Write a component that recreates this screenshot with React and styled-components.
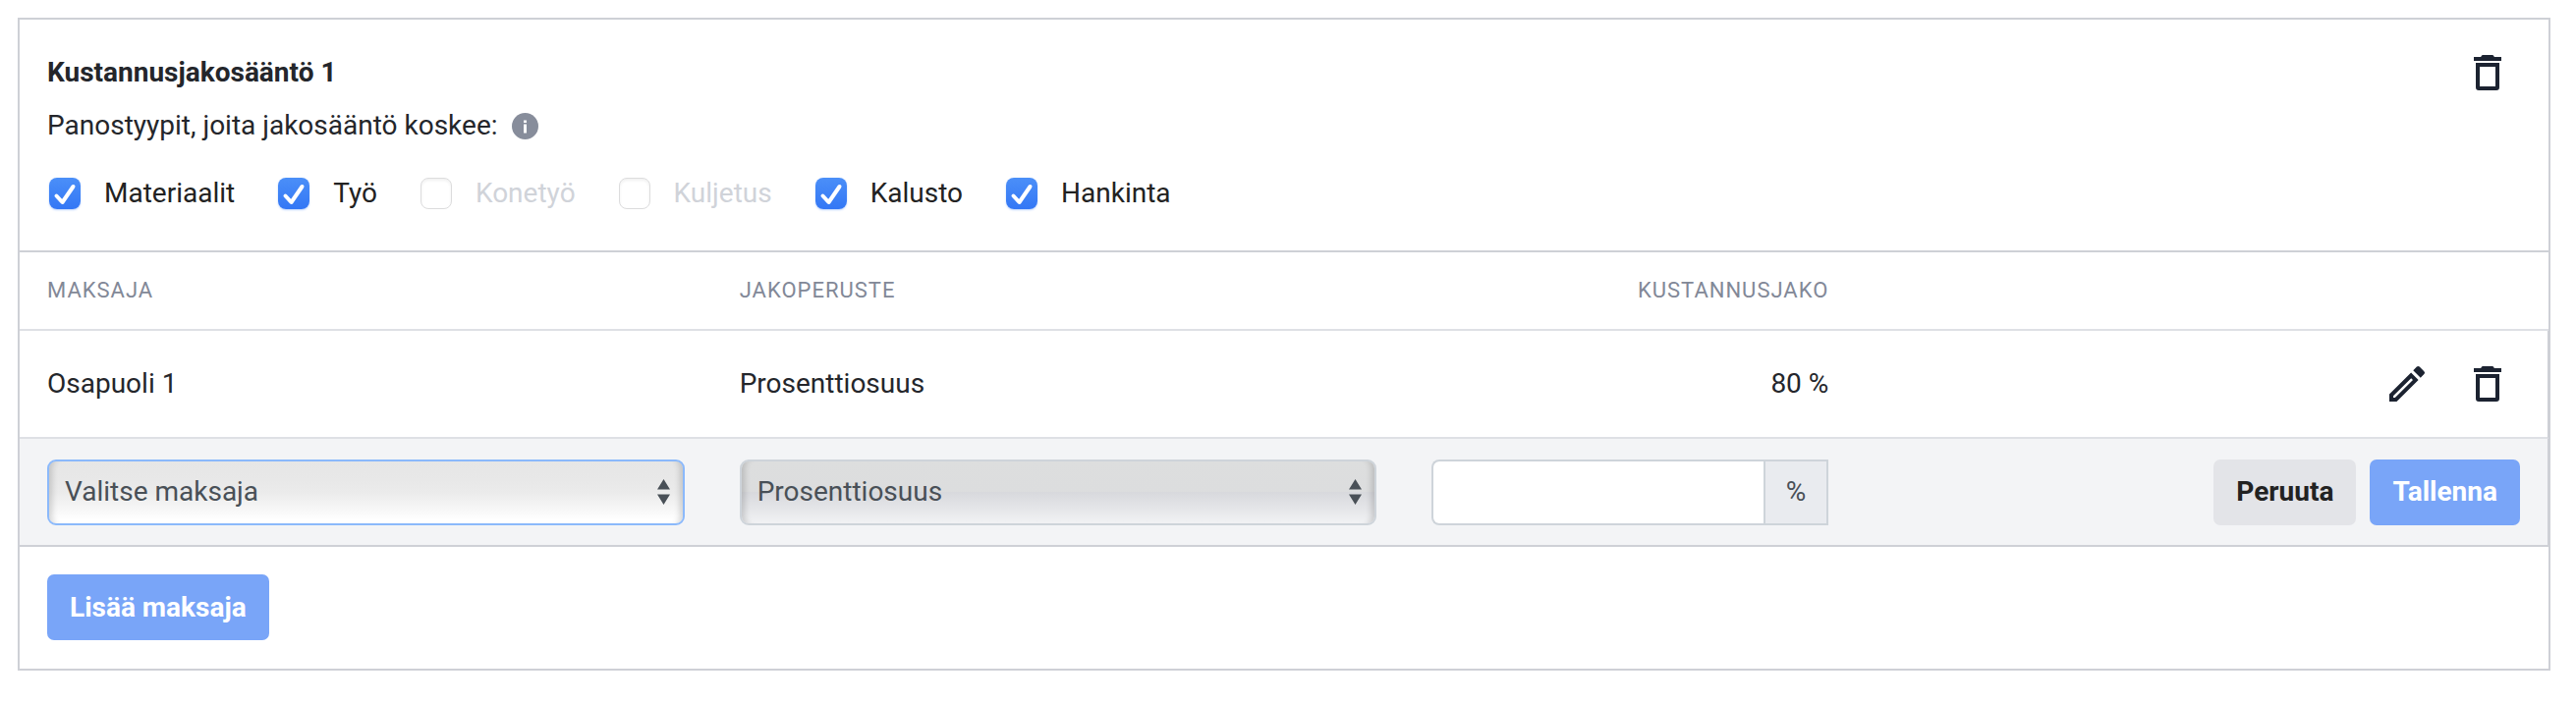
import React from "react";
import styled, { createGlobalStyle, css } from "styled-components";

const GlobalStyle = createGlobalStyle`
  *, *::before, *::after { box-sizing: border-box; }
  body {
    margin: 0;
    background: #fff;
    color: #24262b;
    font-family: Roboto, "Liberation Sans", sans-serif;
    font-size: 28px;
    line-height: 34px;
  }
  button, input, select { font: inherit; color: inherit; margin: 0; }
`;

const Page = styled.main`
  padding: 18px 26px 33px 18px;
`;

const Card = styled.section`
  border: 2px solid #ced0d6;
`;

const CardHeader = styled.header`
  display: flex;
  justify-content: space-between;
  align-items: flex-start;
  padding: 30px 38px 41px 28px;
  border-bottom: 2px solid #ced0d6;
`;

const Title = styled.h2`
  margin: 7px 0 0;
  font-size: 28px;
  line-height: 34px;
  font-weight: 700;
`;

const Rule = styled.fieldset`
  margin: 20px 0 0;
  padding: 0;
  border: 0;
`;

const Legend = styled.legend`
  display: flex;
  align-items: center;
  gap: 14px;
  padding: 0;
`;

const InfoIcon = styled.svg`
  width: 27px;
  height: 27px;
  flex: none;
`;

const Choices = styled.div`
  display: flex;
  gap: 44px;
  margin-top: 35px;
  padding-left: 2px;
`;

const Choice = styled.label`
  display: flex;
  align-items: center;
  gap: 24px;
  color: ${(p) => (p.$muted ? "#d0d3d9" : "#222")};
`;

const BoxWrap = styled.span`
  position: relative;
  display: flex;
  width: 32px;
  height: 32px;
`;

const Box = styled.input`
  appearance: none;
  width: 32px;
  height: 32px;
  margin: 0;
  border: 1px solid #dcdcdd;
  border-radius: 8px;
  background: #fff;
  box-shadow: inset 0 2px 3px rgba(0, 0, 0, 0.06);
  &:checked {
    border: 0;
    background: linear-gradient(#4b8ff8, #3377f5);
    box-shadow: 0 1px 2px rgba(51, 119, 245, 0.35);
  }
`;

const Tick = styled.svg`
  position: absolute;
  inset: 0;
  pointer-events: none;
`;

const IconButton = styled.button`
  display: flex;
  width: 48px;
  height: 48px;
  padding: 0;
  border: 0;
  background: none;
  color: #1c2331;
`;

const Table = styled.table`
  width: 100%;
  table-layout: fixed;
  border-collapse: separate;
  border-spacing: 0;
`;

const ShareCol = styled.col`
  width: 460px;
`;

const Head = styled.th`
  height: 80px;
  padding: 0 28px;
  border-bottom: 2px solid #dee0e5;
  color: #828897;
  font-size: 22px;
  font-weight: 400;
  letter-spacing: 1px;
  text-align: ${(p) => (p.$end ? "right" : "left")};
`;

const Cell = styled.td`
  height: 110px;
  padding: 0 28px;
  text-align: ${(p) => (p.$end ? "right" : "left")};
  border-bottom: 2px solid ${(p) => (p.$edit ? "#ced0d6" : "#dee0e5")};
  background: ${(p) => (p.$edit ? "#f3f4f6" : "#fff")};
  &:last-child { border-right: 1px solid #ced0d6; }
`;

const Actions = styled.div`
  display: flex;
  justify-content: flex-end;
  align-items: center;
  gap: ${(p) => (p.$icons ? "34px" : "14px")};
  padding-right: ${(p) => (p.$icons ? "9px" : "0")};
`;

const SelectWrap = styled.div`
  position: relative;
  display: flex;
`;

const fieldBorder = css`
  border: 2px solid #ced4da;
  height: 67px;
`;

const Select = styled.select`
  ${fieldBorder}
  appearance: none;
  width: 100%;
  padding: 0 48px 0 16px;
  border-radius: 9px;
  color: #495057;
  outline: none;
  background: linear-gradient(#e6e6e6 0%, #e8e8e8 30%, #ebebeb 50%, #f8f8f8 80%, #fff 95%);
  box-shadow: inset 9px 0 6px -6px rgba(0, 0, 0, 0.16), inset -9px 0 6px -6px rgba(0, 0, 0, 0.16);
  ${(p) => p.$focused && css`border-color: #8bb9fb;`}
  &:disabled {
    opacity: 1;
    background: linear-gradient(#dddede 0%, #dcddde 48%, #d8d9dd 50%, #e4e5e8 75%, #f0f1f3 98%);
  }
`;

const Arrows = styled.svg`
  position: absolute;
  right: 15px;
  top: 20px;
  pointer-events: none;
`;

const InputGroup = styled.div`
  display: flex;
`;

const AmountInput = styled.input`
  ${fieldBorder}
  flex: 1;
  min-width: 0;
  padding: 0 16px;
  border-radius: 8px 0 0 8px;
  border-right: 0;
  background: #fff;
`;

const Unit = styled.span`
  ${fieldBorder}
  display: flex;
  align-items: center;
  padding: 0 21px;
  background: #e9ebef;
  color: #495057;
`;

const Button = styled.button`
  height: 67px;
  padding: 0 23px;
  border: 0;
  border-radius: 7px;
  font-weight: 700;
  white-space: nowrap;
  background: ${(p) => (p.$primary ? "#79a5f8" : "#e3e4e8")};
  color: ${(p) => (p.$primary ? "#fff" : "#222")};
`;

const CardFooter = styled.footer`
  display: flex;
  padding: 28px 28px 29px;
`;

function TrashIcon() {
  return (
    <svg width="48" height="48" viewBox="0 0 24 24" fill="currentColor" aria-hidden="true">
      <path d="M5 4h3.600c.3-.7.6-1 1.200-1h4.400c.6 0 .9.3 1.200 1H19v2H5zM6 7h12v12.500a1.500 1.500 0 0 1-1.500 1.500h-9A1.500 1.500 0 0 1 6 19.500zM8 9v10h8V9z" fillRule="evenodd" />
    </svg>
  );
}

function PencilIcon() {
  return (
    <svg width="48" height="48" viewBox="0 0 24 24" fill="currentColor" aria-hidden="true">
      <path fillRule="evenodd" d="M3 17.250 14.060 6.190l3.750 3.750L6.750 21H3zM5 18.080V19h.920L15 10l-.9-.9z" />
      <path d="M15.130 5.120 16.950 3.300a1 1 0 0 1 1.420 0l2.330 2.330a1 1 0 0 1 0 1.420l-1.820 1.820z" />
    </svg>
  );
}

function SelectField({ label, value, ...rest }) {
  return (
    <SelectWrap>
      <Select aria-label={label} defaultValue={value} {...rest}>
        <option>{value}</option>
      </Select>
      <Arrows width="13" height="26" viewBox="0 0 13 26" fill="#495057" aria-hidden="true">
        <path d="M6.500 0 13 10.500H0zM0 15.500h13L6.500 26z" />
      </Arrows>
    </SelectWrap>
  );
}

const choices = [
  { name: "Materiaalit", on: true },
  { name: "Työ", on: true },
  { name: "Konetyö", disabled: true },
  { name: "Kuljetus", disabled: true },
  { name: "Kalusto", on: true },
  { name: "Hankinta", on: true },
];

export default function App() {
  return (
    <Page>
      <GlobalStyle />
      <Card>
        <CardHeader>
          <div>
            <Title>Kustannusjakosääntö 1</Title>
            <Rule>
              <Legend>
                Panostyypit, joita jakosääntö koskee:
                <InfoIcon viewBox="0 0 27 27" aria-hidden="true">
                  <circle cx="13.500" cy="13.500" r="13.500" fill="#878d9b" />
                  <path fill="#fff" d="M12 7.500h3v2.500h-3zM12 11.500h3v9h-3z" />
                </InfoIcon>
              </Legend>
              <Choices>
                {choices.map((c) => (
                  <Choice key={c.name} $muted={c.disabled}>
                    <BoxWrap>
                      <Box type="checkbox" defaultChecked={c.on} disabled={c.disabled} />
                      {c.on && (
                        <Tick width="32" height="32" viewBox="0 0 32 32" aria-hidden="true">
                          <path d="M7.500 18.500 13.500 25 24.500 9" fill="none" stroke="#fff" strokeWidth="4" strokeLinecap="round" strokeLinejoin="round" />
                        </Tick>
                      )}
                    </BoxWrap>
                    {c.name}
                  </Choice>
                ))}
              </Choices>
            </Rule>
          </div>
          <IconButton type="button" aria-label="Poista jakosääntö">
            <TrashIcon />
          </IconButton>
        </CardHeader>
        <Table>
          <colgroup>
            <col />
            <col />
            <ShareCol />
            <col />
          </colgroup>
          <thead>
            <tr>
              <Head>MAKSAJA</Head>
              <Head>JAKOPERUSTE</Head>
              <Head $end>KUSTANNUSJAKO</Head>
              <Head />
            </tr>
          </thead>
          <tbody>
            <tr>
              <Cell>Osapuoli 1</Cell>
              <Cell>Prosenttiosuus</Cell>
              <Cell $end>80 %</Cell>
              <Cell>
                <Actions $icons>
                  <IconButton type="button" aria-label="Muokkaa"><PencilIcon /></IconButton>
                  <IconButton type="button" aria-label="Poista maksaja"><TrashIcon /></IconButton>
                </Actions>
              </Cell>
            </tr>
            <tr>
              <Cell $edit><SelectField label="Maksaja" value="Valitse maksaja" $focused /></Cell>
              <Cell $edit><SelectField label="Jakoperuste" value="Prosenttiosuus" disabled /></Cell>
              <Cell $edit>
                <InputGroup>
                  <AmountInput type="text" aria-label="Kustannusjako" />
                  <Unit>%</Unit>
                </InputGroup>
              </Cell>
              <Cell $edit>
                <Actions>
                  <Button type="button">Peruuta</Button>
                  <Button type="button" $primary>Tallenna</Button>
                </Actions>
              </Cell>
            </tr>
          </tbody>
        </Table>
        <CardFooter>
          <Button type="button" $primary>Lisää maksaja</Button>
        </CardFooter>
      </Card>
    </Page>
  );
}
